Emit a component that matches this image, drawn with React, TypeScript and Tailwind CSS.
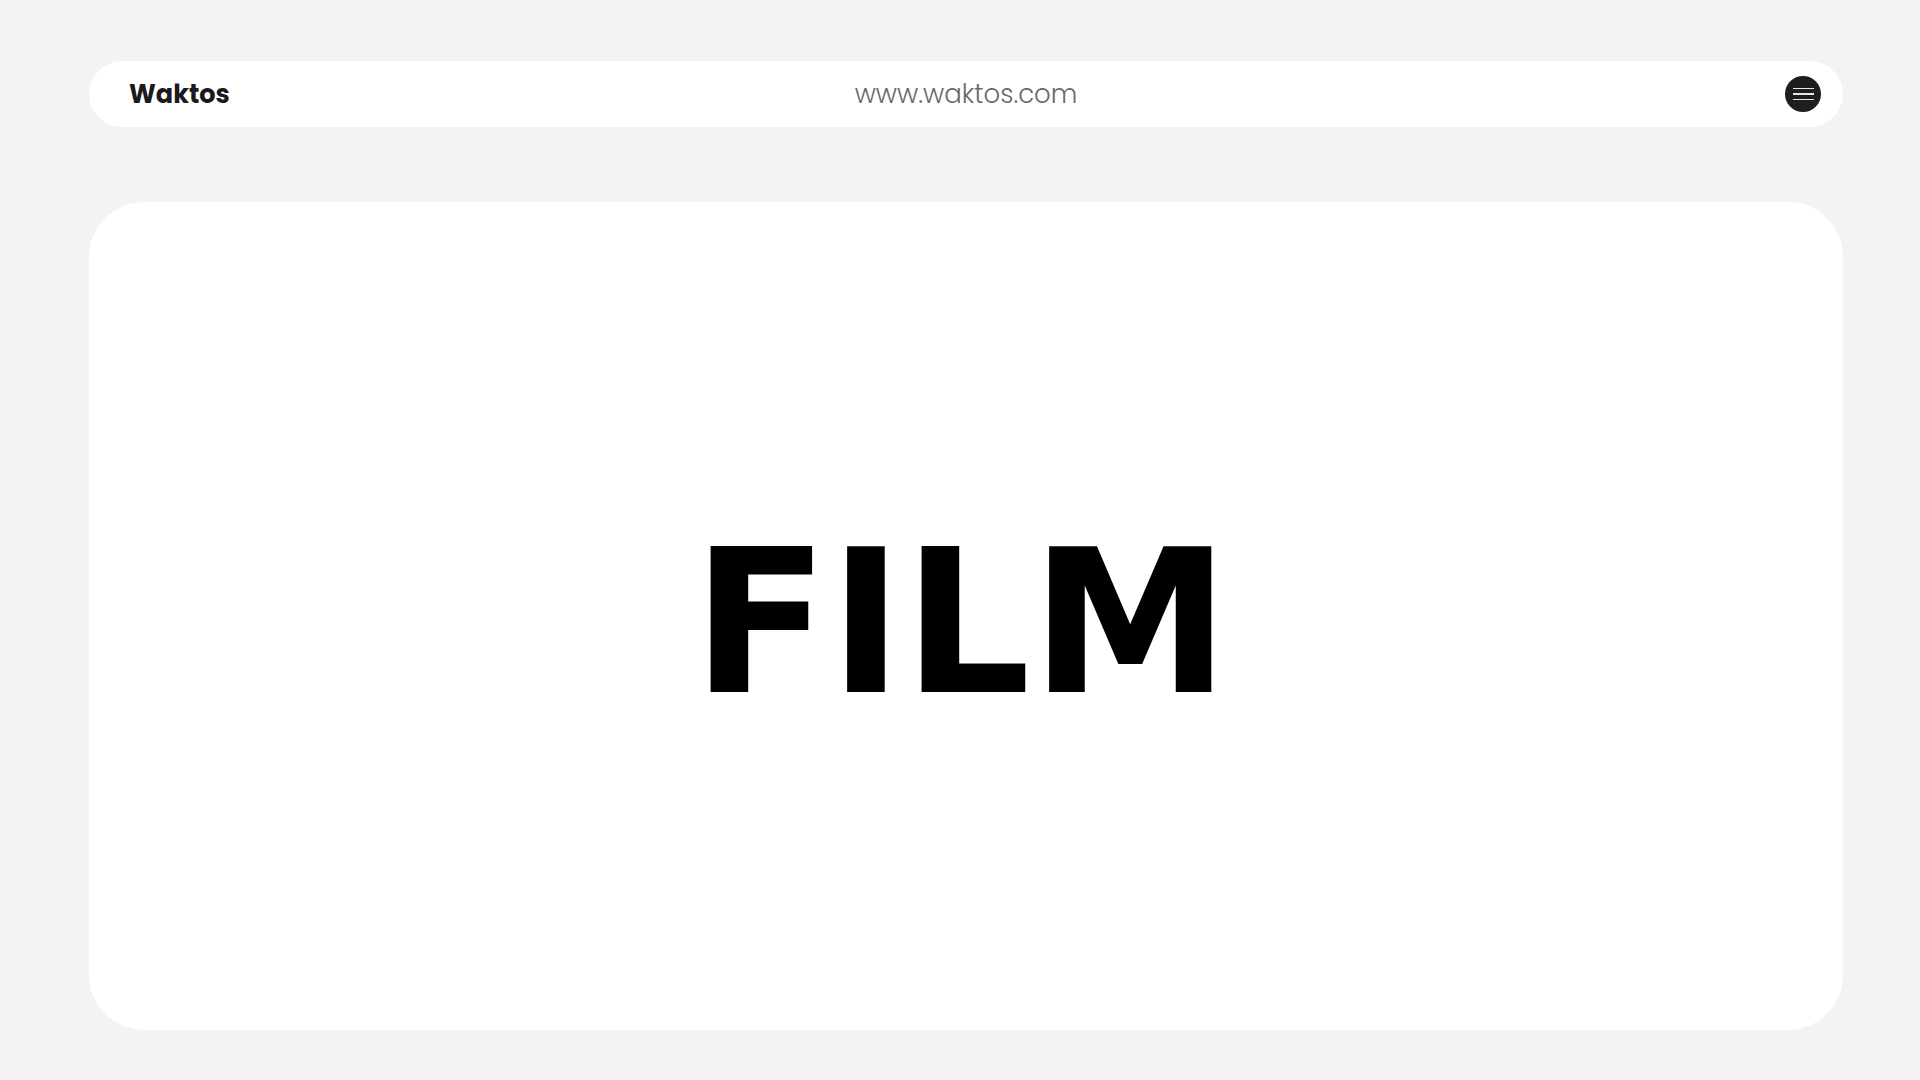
import React from 'react';

function MenuButton() {
  return (
    <button className="w-9 h-9 rounded-full bg-[#1f1d1e] flex flex-col items-center justify-center gap-[4px]">
      <span className="block w-[21px] h-[1.5px] bg-white/90" />
      <span className="block w-[21px] h-[1.5px] bg-white/90" />
      <span className="block w-[21px] h-[1.5px] bg-white/90" />
    </button>
  );
}

export default function App() {
  return (
    <div className="min-h-screen w-full bg-[#f4f2f3] pl-[89px] pr-[77px] pt-[61px] pb-[50px]">
      <header className="relative h-[66px] bg-white rounded-full flex items-center justify-between pl-[40px] pr-[22px]">
        <span className="font-['Poppins','Inter',sans-serif] font-bold text-[25.5px] text-[#1c1a1b]">
          Waktos
        </span>
        <span className="absolute left-1/2 -translate-x-1/2 font-['Poppins','Inter',sans-serif] font-light text-[26px] text-[#6b6a6a]">
          www.waktos.com
        </span>
        <MenuButton />
      </header>

      <main className="mt-[75px] h-[828px] bg-white rounded-[55px] flex items-center justify-center pt-[14px] pr-[10px]">
        <h1 className="font-['DejaVu_Sans',sans-serif] font-bold text-[200px] leading-none text-black">
          FILM
        </h1>
      </main>
    </div>
  );
}
